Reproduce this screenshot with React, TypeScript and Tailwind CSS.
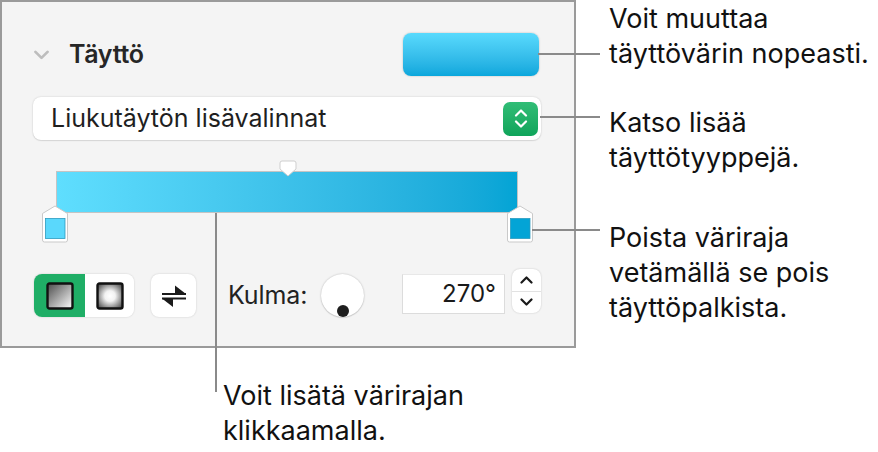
import React from 'react';

const font = { fontFamily: 'Inter, "Liberation Sans", sans-serif' };

function Chevron({ up, className }: { up?: boolean; className?: string }) {
  return (
    <svg viewBox="0 0 14 9" className={className} fill="none">
      <path
        d={up ? 'M2 7.5 L7 2.5 L12 7.5' : 'M2 1.5 L7 6.5 L12 1.5'}
        stroke="currentColor"
        strokeWidth="2.2"
        strokeLinecap="round"
        strokeLinejoin="round"
      />
    </svg>
  );
}

function ColorStop({ color }: { color: string }) {
  return (
    <svg width="28" height="38" viewBox="0 0 28 38">
      <path
        d="M14 1 L26.5 8.5 L26.5 35 Q26.5 37 24.5 37 L3.5 37 Q1.5 37 1.5 35 L1.5 8.5 Z"
        fill="#ffffff"
        stroke="#c9c9c9"
        strokeWidth="1"
      />
      <rect x="4.5" y="13.5" width="19.5" height="20" fill={color} stroke="#2b9cc0" strokeWidth="0.8" />
    </svg>
  );
}

function LinearIcon() {
  return (
    <svg width="28" height="28" viewBox="0 0 28 28">
      <defs>
        <linearGradient id="lin" x1="0" y1="0" x2="1" y2="1">
          <stop offset="0" stopColor="#4a4a4a" />
          <stop offset="1" stopColor="#ffffff" />
        </linearGradient>
      </defs>
      <rect x="1.5" y="1.5" width="25" height="25" rx="2" fill="url(#lin)" stroke="#111" strokeWidth="2.4" />
    </svg>
  );
}

function RadialIcon() {
  return (
    <svg width="28" height="28" viewBox="0 0 28 28">
      <defs>
        <radialGradient id="rad" cx="0.5" cy="0.5" r="0.6">
          <stop offset="0" stopColor="#ffffff" />
          <stop offset="0.35" stopColor="#f2f2f2" />
          <stop offset="1" stopColor="#5a5a5a" />
        </radialGradient>
      </defs>
      <rect x="1.5" y="1.5" width="25" height="25" rx="2" fill="url(#rad)" stroke="#111" strokeWidth="2.4" />
    </svg>
  );
}

function SwapIcon() {
  return (
    <svg width="26" height="24" viewBox="0 0 26 24">
      <line x1="1" y1="10" x2="25" y2="10" stroke="#1a1a1a" strokeWidth="2" />
      <path d="M14 1.5 L25 10 L14 10 Z" fill="#1a1a1a" />
      <line x1="1" y1="14.5" x2="25" y2="14.5" stroke="#1a1a1a" strokeWidth="2" />
      <path d="M12 23 L1 14.5 L12 14.5 Z" fill="#1a1a1a" />
    </svg>
  );
}

function TopMarker() {
  return (
    <svg width="18" height="17" viewBox="0 0 18 17">
      <path
        d="M3 1 L15 1 Q17 1 17 3 L17 9 L9 16 L1 9 L1 3 Q1 1 3 1 Z"
        fill="#ffffff"
        stroke="#cfcfcf"
        strokeWidth="1"
      />
    </svg>
  );
}

export default function App() {
  return (
    <div className="relative w-[878px] h-[452px] bg-white overflow-hidden text-[#111]" style={font}>
      <div className="flex">
        {/* Inspector panel */}
        <div className="w-[576px] h-[348px] border-2 border-[#9a9a9a] bg-[#f4f4f4] px-[31px] pt-[31px] shrink-0">
          <div className="flex items-center justify-between h-[43px] pr-[4px]">
            <div className="flex items-center">
              <Chevron className="w-[17px] h-[11px] text-[#bdbdbd] mt-[2px]" />
              <span className="ml-[19px] text-[25px] font-semibold text-[#262626] tracking-[-0.3px]">Täyttö</span>
            </div>
            <div className="w-[136px] h-[43px] rounded-[8px] bg-gradient-to-b from-[#58dafd] to-[#09a7dc] shadow-[0_0_2px_rgba(0,0,0,0.25)]" />
          </div>

          <div className="mt-[21px] mr-[2px] h-[43px] rounded-[8px] bg-white shadow-[0_0_2px_rgba(0,0,0,0.18),0_1px_1px_rgba(0,0,0,0.08)] flex items-center justify-between pl-[18px] pr-[3px]">
            <span className="text-[25px] text-[#1f1f1f]">Liukutäytön lisävalinnat</span>
            <div className="w-[35px] h-[34px] rounded-[7px] bg-gradient-to-b from-[#30bd76] to-[#0ea45a] flex flex-col items-center justify-center gap-[3px] text-white">
              <Chevron up className="w-[14px] h-[9px]" />
              <Chevron className="w-[14px] h-[9px]" />
            </div>
          </div>

          <div className="relative mt-[31px] ml-[23px] w-[462px] h-[42px] border border-[#c4c4c4] bg-gradient-to-r from-[#5fdefe] to-[#03a4d5]">
            <div className="absolute left-[222px] top-[-12px]">
              <TopMarker />
            </div>
            <div className="absolute left-[-16px] top-[33px]">
              <ColorStop color="#5ad8fc" />
            </div>
            <div className="absolute left-[449px] top-[33px]">
              <ColorStop color="#03a4d6" />
            </div>
          </div>

          <div className="flex items-center mt-[61px] h-[43px]">
            <div className="ml-[1px] flex h-[43px] w-[100px] rounded-[8px] overflow-hidden shadow-[0_0_2px_rgba(0,0,0,0.18)]">
              <div className="w-[51px] h-full bg-[#1fae66] flex items-center justify-center">
                <LinearIcon />
              </div>
              <div className="flex-1 h-full bg-white flex items-center justify-center">
                <RadialIcon />
              </div>
            </div>
            <div className="ml-[17px] w-[45px] h-[43px] rounded-[8px] bg-white shadow-[0_0_2px_rgba(0,0,0,0.18)] flex items-center justify-center">
              <SwapIcon />
            </div>
            <span className="ml-[32px] w-[93px] text-[25px] text-[#222] tracking-[-0.1px]">Kulma:</span>
            <div className="relative w-[43px] h-[43px] rounded-full bg-white shadow-[0_0_2px_rgba(0,0,0,0.25),0_1px_1px_rgba(0,0,0,0.1)]">
              <div className="absolute left-[16px] top-[31px] w-[12px] h-[12px] rounded-full bg-[#1e1e1e]" />
            </div>
            <div className="ml-[38px] w-[103px] h-[40px] bg-white border border-[#dcdcdc] border-t-[#e8e8e8] flex items-center justify-end pr-[8px] text-[24px] text-[#1a1a1a] mb-[3px]">
              270°
            </div>
            <div className="ml-[7px] w-[29px] h-[44px] rounded-[8px] bg-white shadow-[0_0_2px_rgba(0,0,0,0.2)] flex flex-col mb-[9px]">
              <div className="flex-1 flex items-center justify-center border-b border-[#e2e2e2]">
                <Chevron up className="w-[15px] h-[9px] text-[#1a1a1a]" />
              </div>
              <div className="flex-1 flex items-center justify-center">
                <Chevron className="w-[15px] h-[9px] text-[#1a1a1a]" />
              </div>
            </div>
          </div>
        </div>

        {/* Callouts */}
        <div className="pl-[33px] text-[27px] leading-[35px] whitespace-nowrap">
          <p className="mt-[1px]">
            Voit muuttaa
            <br />
            täyttövärin nopeasti.
          </p>
          <p className="mt-[34px]">
            Katso lisää
            <br />
            täyttötyyppejä.
          </p>
          <p className="mt-[45px]">
            Poista väriraja
            <br />
            vetämällä se pois
            <br />
            täyttöpalkista.
          </p>
        </div>
      </div>

      <p className="ml-[223px] mt-[30px] text-[27px] leading-[35px]">
        Voit lisätä värirajan
        <br />
        klikkaamalla.
      </p>

      {/* Leader lines */}
      <div className="absolute left-[538px] top-[53px] w-[62px] h-[2px] bg-[#8a8a8a]" />
      <div className="absolute left-[540px] top-[116px] w-[60px] h-[2px] bg-[#8a8a8a]" />
      <div className="absolute left-[532px] top-[229px] w-[68px] h-[2px] bg-[#8a8a8a]" />
      <div className="absolute left-[215px] top-[213px] w-[2px] h-[179px] bg-[#8a8a8a]" />
    </div>
  );
}
